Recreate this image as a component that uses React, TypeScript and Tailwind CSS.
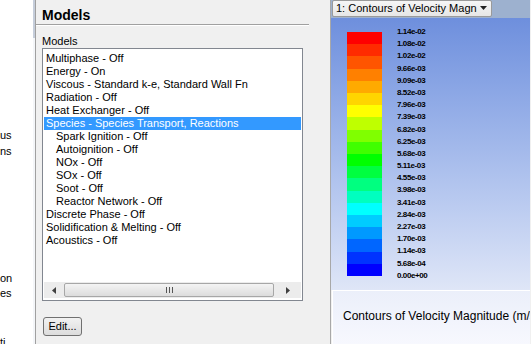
import React from 'react';

const models: { label: string; indent?: boolean; selected?: boolean }[] = [
    { label: 'Multiphase - Off' },
    { label: 'Energy - On' },
    { label: 'Viscous - Standard k-e, Standard Wall Fn' },
    { label: 'Radiation - Off' },
    { label: 'Heat Exchanger - Off' },
    { label: 'Species - Species Transport, Reactions', selected: true },
    { label: 'Spark Ignition - Off', indent: true },
    { label: 'Autoignition - Off', indent: true },
    { label: 'NOx - Off', indent: true },
    { label: 'SOx - Off', indent: true },
    { label: 'Soot - Off', indent: true },
    { label: 'Reactor Network - Off', indent: true },
    { label: 'Discrete Phase - Off' },
    { label: 'Solidification & Melting - Off' },
    { label: 'Acoustics - Off' },
];

const bands = [
    '#ff0000', '#ff2b00', '#ff5500', '#ff8000', '#ffaa00', '#ffd500', '#ffff00',
    '#bfff00', '#80ff00', '#40ff00', '#00ff00', '#00ff40', '#00ff80', '#00ffbf',
    '#00ffff', '#00ccff', '#0099ff', '#0066ff', '#0033ff', '#0000ff',
];

const ticks = [
    '1.14e-02', '1.08e-02', '1.02e-02', '9.66e-03', '9.09e-03', '8.52e-03', '7.96e-03',
    '7.39e-03', '6.82e-03', '6.25e-03', '5.68e-03', '5.11e-03', '4.55e-03', '3.98e-03',
    '3.41e-03', '2.84e-03', '2.27e-03', '1.70e-03', '1.14e-03', '5.68e-04', '0.00e+00',
];

function TreeStrip() {
    return (
        <div className="w-[33px] h-full bg-white overflow-hidden text-[11px] leading-[16px] text-black whitespace-nowrap">
            <div className="h-[127px]" />
            <div>us</div>
            <div>ns</div>
            <div className="h-[111px]" />
            <div>on</div>
            <div className="-mt-px">es</div>
            <div className="h-[33px]" />
            <div>ti</div>
        </div>
    );
}

function ModelsPanel() {
    return (
        <div className="w-[294px] h-full bg-[#f0f0f0] flex flex-col">
            <div className="pl-[6px] pt-[8px] text-[14px] leading-[14px] font-bold text-black">Models</div>
            <div className="mt-[2px] w-[273px] h-px bg-[#a0a0a0]" />
            <div className="w-[273px] h-px bg-white" />
            <div className="pl-[6px] mt-[9px] text-[11px] leading-[13px] text-black">Models</div>
            <div className="ml-[6px] w-[261px] h-[253px] border border-[#828790] bg-white p-px flex flex-col">
                <div className="flex-1 pt-[2px] overflow-hidden">
                    {models.map((m) => (
                        <div key={m.label}
                             className={`h-[13px] text-[11px] leading-[13px] whitespace-nowrap ${m.indent ? 'pl-[12px]' : 'pl-[2px]'} ${m.selected ? 'bg-[#3399ff] text-white' : 'text-black'}`}>
                            {m.label}
                        </div>
                    ))}
                </div>
                <div className="h-[16px] mb-px bg-[#ececec] flex items-center">
                    <div className="w-[20px] flex justify-center">
                        <svg width="4" height="7" viewBox="0 0 4 7"><path d="M4 0v7L0 3.5z" fill="#404040"/></svg>
                    </div>
                    <div className="w-[210px] h-[14px] rounded-[2px] border border-[#a7a7a7] bg-gradient-to-b from-[#f4f4f4] to-[#dcdcdc] flex items-center justify-center gap-[2px]">
                        <div className="w-px h-[6px] bg-[#555]" />
                        <div className="w-px h-[6px] bg-[#555]" />
                        <div className="w-px h-[6px] bg-[#555]" />
                    </div>
                    <div className="flex-1 flex justify-center">
                        <svg width="4" height="7" viewBox="0 0 4 7"><path d="M0 0v7l4-3.5z" fill="#404040"/></svg>
                    </div>
                </div>
            </div>
            <button type="button"
                    className="ml-[7px] mt-[16px] w-[39px] h-[19px] rounded-[3px] border border-[#707070] bg-gradient-to-b from-[#f2f2f2] to-[#dcdcdc] text-[11px] leading-[15px] text-black">
                Edit...
            </button>
        </div>
    );
}

function GraphicsPanel() {
    return (
        <div className="w-[200px] h-full border-l border-[#a8a8a8] flex flex-col">
            <div className="h-[18px] bg-[#9db1cf] flex items-start pl-px">
                <div className="w-[160px] h-[17px] rounded-[2px] border border-[#9a9a9a] bg-gradient-to-b from-[#f6f6f6] to-[#e6e6e6] flex items-center justify-between pl-[3px] pr-[3px]">
                    <span className="text-[11px] leading-[15px] text-black whitespace-nowrap">1: Contours of Velocity Magn</span>
                    <svg width="8" height="5" viewBox="0 0 8 5"><path d="M0 0h7L3.5 4z" fill="#222"/></svg>
                </div>
            </div>
            <div className="h-[272px] bg-gradient-to-b from-[#6e8fdd] to-[#dfe6f7] flex pl-[16px] pt-[14px]">
                <div className="w-[35px] h-[244px] flex flex-col">
                    {bands.map((c) => (
                        <div key={c} className="flex-1" style={{ backgroundColor: c }} />
                    ))}
                </div>
                <div className="ml-[15px] -mt-[6px] h-[256px] flex flex-col">
                    {ticks.map((t) => (
                        <div key={t} className="flex-1 text-[8px] leading-[12px] font-semibold tracking-tighter text-black whitespace-nowrap">{t}</div>
                    ))}
                </div>
            </div>
            <div className="flex-1 ml-px border-t border-l border-white bg-gradient-to-b from-[#ebeffa] to-[#f7f8fe] pl-[10px] pt-[18px] text-[12px] leading-[14px] text-black whitespace-nowrap overflow-hidden">
                Contours of Velocity Magnitude (m/s)
            </div>
        </div>
    );
}

export default function App() {
    return (
        <div className="w-[531px] h-[344px] flex overflow-hidden bg-[#f0f0f0]" style={{ fontFamily: '"Liberation Sans", Arial, sans-serif' }}>
            <TreeStrip />
            <div className="w-[3px] h-full border-r border-[#a0a0a0] bg-[#f4f6f9] flex flex-col">
                <div className="h-[38px] bg-[#c6cedb]" />
            </div>
            <ModelsPanel />
            <GraphicsPanel />
        </div>
    );
}
